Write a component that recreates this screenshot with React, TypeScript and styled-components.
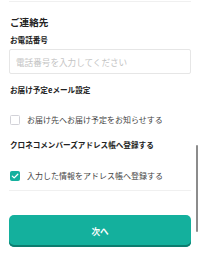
import styled, { createGlobalStyle } from "styled-components";

const GlobalStyle = createGlobalStyle`
  html, body {
    margin: 0;
    padding: 0;
    background: #ffffff;
  }
  body {
    font-family: "Noto Sans CJK JP", "Noto Sans", sans-serif;
    color: #222222;
  }
`;

const Page = styled.div`
  position: relative;
  width: 200px;
  height: 275px;
  overflow: hidden;
  background: #ffffff;
`;

const Content = styled.div`
  display: flex;
  flex-direction: column;
  padding: 1px 9px 0 9px;
`;

const Divider = styled.div<{ $top?: number }>`
  height: 1px;
  background: #f0f0f0;
  margin-top: ${(p) => p.$top ?? 0}px;
`;

const SectionTitle = styled.h2`
  margin: 14px 0 0 1px;
  font-size: 9.6px;
  line-height: 12px;
  font-weight: 700;
  color: #222222;
`;

const Label = styled.div<{ $top: number }>`
  margin: ${(p) => p.$top}px 0 0 1px;
  font-size: 7.6px;
  line-height: 10px;
  font-weight: 700;
  color: #222222;
  white-space: nowrap;
`;

const Input = styled.input`
  box-sizing: border-box;
  width: 100%;
  height: 25px;
  margin-top: 4px;
  padding: 0 6px;
  border: 1px solid #e6e6e6;
  border-radius: 2px;
  font-family: inherit;
  font-size: 8.6px;
  color: #222222;
  outline: none;

  &::placeholder {
    color: #c4c4c4;
  }
`;

const CheckRow = styled.label<{ $top: number }>`
  display: flex;
  align-items: center;
  gap: 7px;
  height: 12px;
  margin: ${(p) => p.$top}px 0 0 1px;
  font-size: 8px;
  line-height: 12px;
  color: #444444;
  white-space: nowrap;
`;

const Box = styled.span<{ $checked?: boolean }>`
  box-sizing: border-box;
  display: flex;
  align-items: center;
  justify-content: center;
  width: 10px;
  height: 10px;
  border-radius: 1.5px;
  border: 1px solid ${(p) => (p.$checked ? "#15b09e" : "#d2d2d8")};
  background: ${(p) => (p.$checked ? "#15b09e" : "#ffffff")};
`;

const NextButton = styled.button`
  width: 100%;
  height: 32px;
  margin-top: 24px;
  border: none;
  border-radius: 5px;
  background: #14b09d;
  box-shadow: inset 0 -2px 0 #0b7d6f;
  color: #ffffff;
  font-family: inherit;
  font-size: 8.6px;
  font-weight: 700;
  cursor: pointer;
`;

const ScrollThumb = styled.div`
  position: absolute;
  right: 2px;
  top: 145px;
  width: 2px;
  height: 87px;
  border-radius: 1px;
  background: #8c8c8c;
`;

function Check({ checked }: { checked?: boolean }) {
  return (
    <Box $checked={checked}>
      {checked && (
        <svg width="8" height="8" viewBox="0 0 8 8">
          <path
            d="M1.3 4.1 L3.2 5.9 L6.8 2.2"
            fill="none"
            stroke="#ffffff"
            strokeWidth="1.3"
            strokeLinecap="round"
            strokeLinejoin="round"
          />
        </svg>
      )}
    </Box>
  );
}

export default function App() {
  return (
    <Page>
      <GlobalStyle />
      <Content>
        <Divider />
        <SectionTitle>ご連絡先</SectionTitle>
        <Label $top={7}>お電話番号</Label>
        <Input placeholder="電話番号を入力してください" />
        <Label $top={11}>お届け予定eメール設定</Label>
        <CheckRow $top={19}>
          <Check />
          お届け先へお届け予定をお知らせする
        </CheckRow>
        <Label $top={14}>クロネコメンバーズアドレス帳へ登録する</Label>
        <CheckRow $top={20}>
          <Check checked />
          入力した情報をアドレス帳へ登録する
        </CheckRow>
        <Divider $top={8} />
        <NextButton>次へ</NextButton>
      </Content>
      <ScrollThumb />
    </Page>
  );
}
